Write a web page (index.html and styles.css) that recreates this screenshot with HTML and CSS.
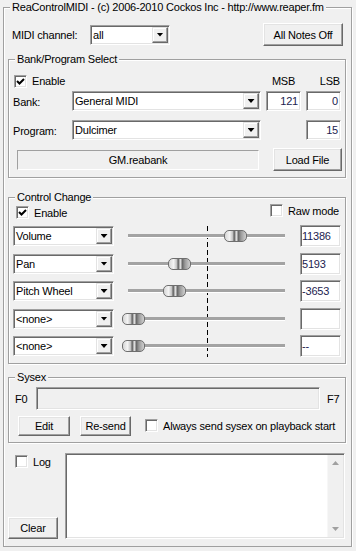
FILE: index.html
```html
<!DOCTYPE html>
<html lang="en">
<head>
    <meta charset="UTF-8">
    <meta name="viewport" content="width=device-width, initial-scale=1.0">
    <title>ReaControlMIDI</title>
    <link rel="stylesheet" href="styles.css">
</head>
<body>
    <fieldset class="main">
        <legend>ReaControlMIDI - (c) 2006-2010 Cockos Inc - http://www.reaper.fm</legend>

        <!-- Canal MIDI -->
        <div class="channel-row">
            <span class="channel-label">MIDI channel:</span>
            <div class="combo channel-combo"><span class="combo-text">all</span><span class="combo-btn"></span></div>
            <button class="btn notes-off">All Notes Off</button>
        </div>

        <!-- Bank / Program -->
        <fieldset class="group">
            <legend>Bank/Program Select</legend>
            <div class="bank-head">
                <label class="check-item bank-enable">
                    <span class="check"><svg width="9" height="9" viewBox="0 0 9 9"><polyline points="1,4 3.5,6.5 8,2" fill="none" stroke="#000" stroke-width="2"/></svg></span>
                    Enable
                </label>
                <span class="msb-label">MSB</span>
                <span class="lsb-label">LSB</span>
            </div>
            <div class="bank-row">
                <span class="field-label">Bank:</span>
                <div class="combo bank-combo"><span class="combo-text">General MIDI</span><span class="combo-btn"></span></div>
                <div class="edit num msb">121</div>
                <div class="edit num lsb">0</div>
            </div>
            <div class="bank-row program-row">
                <span class="field-label">Program:</span>
                <div class="combo bank-combo"><span class="combo-text">Dulcimer</span><span class="combo-btn"></span></div>
                <div class="edit num program-num">15</div>
            </div>
            <div class="file-row">
                <div class="static file-name">GM.reabank</div>
                <button class="btn load-btn">Load File</button>
            </div>
        </fieldset>

        <!-- Control Change -->
        <fieldset class="group cc-group">
            <legend>Control Change</legend>
            <div class="cc-head">
                <label class="check-item cc-enable">
                    <span class="check"><svg width="9" height="9" viewBox="0 0 9 9"><polyline points="1,4 3.5,6.5 8,2" fill="none" stroke="#000" stroke-width="2"/></svg></span>
                    Enable
                </label>
                <label class="check-item">
                    <span class="check"></span>
                    Raw mode
                </label>
            </div>
            <div class="cc-rows" id="cc-rows">
                <div class="center-line"></div>
            </div>
        </fieldset>

        <!-- Sysex -->
        <fieldset class="group">
            <legend>Sysex</legend>
            <div class="sysex-row">
                <span class="sysex-label">F0</span>
                <div class="sysex-field"></div>
                <span class="sysex-end">F7</span>
            </div>
            <div class="sysex-buttons">
                <button class="btn edit-btn">Edit</button>
                <button class="btn resend-btn">Re-send</button>
                <label class="check-item always">
                    <span class="check"></span>
                    Always send sysex on playback start
                </label>
            </div>
        </fieldset>

        <!-- Journal -->
        <div class="log-row">
            <div class="log-side">
                <label class="check-item log-check">
                    <span class="check"></span>
                    Log
                </label>
                <button class="btn clear-btn">Clear</button>
            </div>
            <div class="log-box">
                <div class="log-text"></div>
                <div class="scrollbar">
                    <span class="arrow-up"></span>
                    <span class="arrow-down"></span>
                </div>
            </div>
        </div>
    </fieldset>

    <script>
        // Lignes de contrôleurs (thumb = position du curseur en px)
        const controllers = [
            { name: 'Volume', thumb: 102, value: '11386' },
            { name: 'Pan', thumb: 46, value: '5193' },
            { name: 'Pitch Wheel', thumb: 41, value: '-3653' },
            { name: '<none>', thumb: 0, value: '' },
            { name: '<none>', thumb: 0, value: '--' }
        ];

        const rows = document.getElementById('cc-rows');
        controllers.forEach(cc => {
            const row = document.createElement('div');
            row.className = 'cc-row';

            const combo = document.createElement('div');
            combo.className = 'combo cc-combo';
            const text = document.createElement('span');
            text.className = 'combo-text';
            text.textContent = cc.name;
            const btn = document.createElement('span');
            btn.className = 'combo-btn';
            combo.appendChild(text);
            combo.appendChild(btn);

            const slider = document.createElement('div');
            slider.className = 'slider';
            slider.innerHTML = '<div class="track"></div><div class="thumb"></div>';
            slider.querySelector('.thumb').style.left = cc.thumb + 'px';

            const value = document.createElement('div');
            value.className = 'edit cc-value';
            value.textContent = cc.value;

            row.appendChild(combo);
            row.appendChild(slider);
            row.appendChild(value);
            rows.appendChild(row);
        });
    </script>
</body>
</html>
```

FILE: styles.css
```css
/* Fenêtre style Windows classique */
* {
    box-sizing: border-box;
}

body {
    margin: 0;
    background-color: #f0f0f0;
    font-family: "Liberation Sans", Arial, sans-serif;
    font-size: 11px;
    letter-spacing: -0.2px;
    color: #000;
}

fieldset {
    margin: 0;
    padding: 0;
    min-width: 0;
    border: 1px solid #a0a0a0;
    box-shadow: 1px 1px 0 #fff, inset 1px 1px 0 #fff;
}

legend {
    margin-left: 6px;
    padding: 0 2px;
    line-height: 13px;
    background-color: #f0f0f0;
}

.main {
    margin: 1px 0 0 3px;
    width: 349px;
    padding: 0 5px 7px 4px;
}

.main > legend {
    margin-left: 2px;
}

.group {
    margin-top: 7px;
    padding-bottom: 6px;
}

.cc-group {
    margin-top: 13px;
}

/* Contrôles */
.btn {
    font: inherit;
    letter-spacing: inherit;
    color: #000;
    padding: 0;
    background-color: #f0f0f0;
    border: 1px solid;
    border-color: #fff #696969 #696969 #fff;
    box-shadow: inset -1px -1px 0 #a0a0a0, inset 1px 1px 0 #e3e3e3;
}

.combo,
.edit,
.check,
.sysex-field,
.log-box {
    background-color: #fff;
    border: 1px solid;
    border-color: #a0a0a0 #fff #fff #a0a0a0;
    box-shadow: inset 1px 1px 0 #696969, inset -1px -1px 0 #e3e3e3;
}

.combo {
    display: flex;
    align-items: center;
    height: 20px;
    padding: 1px;
}

.combo-text {
    flex: 1;
    padding-left: 1px;
    white-space: nowrap;
    overflow: hidden;
}

.combo-btn {
    width: 16px;
    height: 16px;
    display: flex;
    align-items: center;
    justify-content: center;
    background-color: #f0f0f0;
    border: 1px solid;
    border-color: #e3e3e3 #696969 #696969 #e3e3e3;
    box-shadow: inset -1px -1px 0 #a0a0a0, inset 1px 1px 0 #fff;
}

.combo-btn::after {
    content: "";
    width: 7px;
    height: 4px;
    background-color: #000;
    clip-path: polygon(0 0, 100% 0, 50% 100%);
}

.edit {
    display: flex;
    align-items: center;
    height: 20px;
    padding: 0 2px;
    color: #1c1c50;
}

.num {
    justify-content: flex-end;
    width: 35px;
}

.check {
    width: 13px;
    height: 13px;
    display: flex;
    align-items: center;
    justify-content: center;
}

.check-item {
    display: flex;
    align-items: center;
    gap: 5px;
}

.static {
    display: flex;
    align-items: center;
    justify-content: center;
    border: 1px solid;
    border-color: #a0a0a0 #fff #fff #a0a0a0;
}

/* Canal */
.channel-row {
    display: flex;
    align-items: center;
    height: 23px;
    margin-top: 9px;
    padding-left: 4px;
}

.channel-label {
    width: 78px;
}

.channel-combo {
    width: 80px;
}

.notes-off {
    margin-left: auto;
    margin-right: 3px;
    width: 80px;
    height: 23px;
}

/* Bank / Program */
.bank-head {
    display: flex;
    align-items: center;
    height: 14px;
    margin-top: 8px;
    padding-left: 5px;
}

.bank-enable {
    margin-right: auto;
}

.msb-label {
    width: 35px;
    text-align: center;
}

.lsb-label {
    width: 35px;
    margin: 0 4px 0 5px;
    padding-right: 1px;
    text-align: right;
}

.bank-row {
    display: flex;
    align-items: center;
    height: 20px;
    margin-top: 3px;
    padding-left: 4px;
}

.program-row {
    margin-top: 9px;
}

.field-label {
    width: 59px;
    padding-top: 2px;
}

.bank-combo {
    width: 189px;
}

.msb,
.lsb {
    margin-left: 5px;
}

.program-num {
    margin-left: 45px;
}

.file-row {
    display: flex;
    align-items: center;
    height: 23px;
    margin-top: 8px;
    padding-left: 8px;
}

.file-name {
    width: 242px;
    height: 20px;
}

.load-btn {
    margin-left: 14px;
    width: 69px;
    height: 23px;
}

/* Control Change */
.cc-head {
    display: flex;
    align-items: flex-start;
    height: 14px;
    padding-left: 7px;
}

.cc-enable {
    width: 254px;
    margin-top: 2px;
}

.cc-rows {
    position: relative;
    display: flex;
    flex-direction: column;
    gap: 5.5px;
    margin-top: 7px;
}

.cc-row {
    display: flex;
    align-items: center;
    height: 22px;
    padding-left: 4px;
}

.cc-combo {
    width: 101px;
}

.slider {
    position: relative;
    display: flex;
    align-items: center;
    width: 168px;
    height: 22px;
    margin-left: 8px;
}

.track {
    margin-left: 6px;
    width: 157px;
    height: 4px;
    background-color: #a3a3a3;
    border-bottom: 1px solid #fff;
}

.thumb {
    position: absolute;
    top: 5px;
    width: 23px;
    height: 12px;
    border: 1px solid #6e6e6e;
    border-radius: 5px;
    background: linear-gradient(to right, #d6d6d6 0, #f4f4f4 22%, #c4c4c4 36%, #5e5e5e 44%, #e6e6e6 54%, #6a6a6a 64%, #9a9a9a 76%, #d0d0d0 100%);
}

.cc-value {
    width: 41px;
    height: 22px;
    margin-left: 10px;
    padding-left: 1px;
}

.center-line {
    position: absolute;
    left: 198px;
    top: 1px;
    width: 1px;
    height: 131px;
    background: repeating-linear-gradient(to bottom, #000 0, #000 5px, transparent 5px, transparent 8px);
}

/* Sysex */
.sysex-row {
    display: flex;
    align-items: center;
    height: 23px;
    margin-top: 3px;
    padding-left: 6px;
}

.sysex-label {
    width: 21px;
}

.sysex-field {
    width: 284px;
    height: 23px;
    background-color: #f0f0f0;
}

.sysex-end {
    margin-left: 7px;
}

.sysex-buttons {
    display: flex;
    align-items: center;
    height: 21px;
    margin-top: 5px;
    padding-left: 9px;
}

.edit-btn {
    width: 52px;
    height: 20px;
}

.resend-btn {
    width: 51px;
    height: 20px;
    margin-left: 10px;
}

.always {
    margin-left: 14px;
}

/* Log */
.log-row {
    display: flex;
    height: 86px;
    margin-top: 10px;
}

.log-side {
    width: 50px;
    display: flex;
    flex-direction: column;
    justify-content: space-between;
}

.log-check {
    margin: 2px 0 0 7px;
}

.clear-btn {
    width: 50px;
    height: 22px;
}

.log-box {
    display: flex;
    width: 280px;
    margin-left: 7px;
    padding: 1px;
}

.log-text {
    flex: 1;
}

.scrollbar {
    width: 16px;
    display: flex;
    flex-direction: column;
    justify-content: space-between;
    align-items: center;
    padding: 6px 0;
    background-color: #f0f0f0;
    border-left: 1px solid #f7f7f7;
}

.arrow-up,
.arrow-down {
    width: 7px;
    height: 4px;
    background-color: #a0a0a0;
}

.arrow-up {
    clip-path: polygon(50% 0, 100% 100%, 0 100%);
}

.arrow-down {
    clip-path: polygon(0 0, 100% 0, 50% 100%);
}
```
